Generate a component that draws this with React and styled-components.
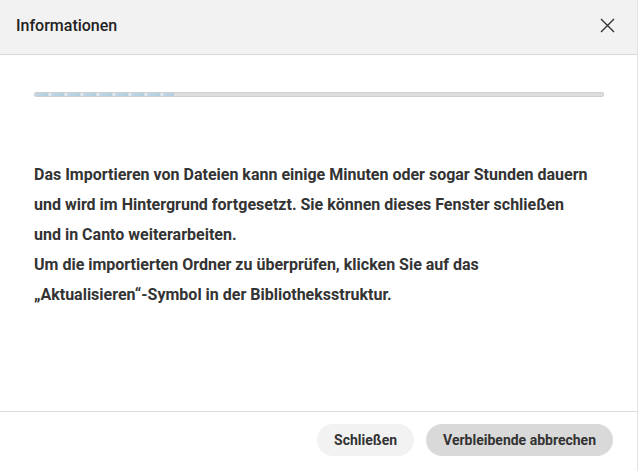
import React from "react";
import styled, { createGlobalStyle } from "styled-components";

const Global = createGlobalStyle`
  html, body { margin: 0; padding: 0; background: #ffffff; }
  body { font-family: Roboto, "Liberation Sans", Arial, sans-serif; }
`;

const Dialog = styled.div`
  width: 637px;
  height: 471px;
  display: flex;
  flex-direction: column;
  background: #ffffff;
  border-right: 1px solid #e4e4e4;
`;

const Header = styled.header`
  height: 55px;
  box-sizing: border-box;
  flex: 0 0 auto;
  display: flex;
  align-items: center;
  justify-content: space-between;
  padding: 0 21px 4px 16px;
  background: #f2f2f2;
  border-bottom: 1px solid #d9d9d9;
`;

const Title = styled.h2`
  margin: 0;
  font-size: 16px;
  font-weight: 500;
  color: #222222;
`;

const CloseButton = styled.button`
  border: 0;
  background: transparent;
  padding: 0;
  width: 18px;
  height: 18px;
  display: flex;
  align-items: center;
  justify-content: center;
  cursor: pointer;
`;

const Body = styled.main`
  flex: 1 1 auto;
  padding: 37px 33px 0 34px;
  display: flex;
  flex-direction: column;
`;

const Track = styled.div`
  height: 3px;
  background: #dedede;
  border: 1px solid #cfcfcf;
  border-radius: 2px;
  overflow: hidden;
`;

const Fill = styled.div`
  height: 100%;
  background: repeating-linear-gradient(
    90deg,
    #c3d7e6 0px,
    #aecde3 13px,
    #e3ecf2 14px,
    #e3ecf2 16px
  );
`;

const Message = styled.p`
  margin: 63px 0 0;
  font-size: 16px;
  font-weight: 700;
  line-height: 30px;
  color: #333333;
`;

const Footer = styled.footer`
  flex: 0 0 60px;
  border-top: 1px solid #dcdcdc;
  display: flex;
  justify-content: flex-end;
  align-items: flex-start;
  gap: 12px;
  padding: 12px 24px 0 0;
  box-sizing: border-box;
`;

const Button = styled.button`
  height: 32px;
  padding: 0 17px;
  border: 0;
  border-radius: 16px;
  font-family: Roboto, "Liberation Sans", Arial, sans-serif;
  font-size: 14px;
  font-weight: 700;
  color: #333333;
  background: ${(p) => (p.$primary ? "#d9d9d9" : "#f2f2f2")};
  cursor: pointer;
`;

export default function App() {
  return (
    <>
      <Global />
      <Dialog>
        <Header>
          <Title>Informationen</Title>
          <CloseButton aria-label="Schließen">
            <svg width="15" height="15" viewBox="0 0 15 15">
              <path d="M1 1 L14 14 M14 1 L1 14" stroke="#333" strokeWidth="1.4" fill="none" />
            </svg>
          </CloseButton>
        </Header>
        <Body>
          <Track>
            <Fill style={{ width: "24.4%" }} />
          </Track>
          <Message>
            Das Importieren von Dateien kann einige Minuten oder sogar Stunden dauern
            <br />
            und wird im Hintergrund fortgesetzt. Sie können dieses Fenster schließen
            <br />
            und in Canto weiterarbeiten.
            <br />
            Um die importierten Ordner zu überprüfen, klicken Sie auf das
            <br />
            „Aktualisieren“-Symbol in der Bibliotheksstruktur.
          </Message>
        </Body>
        <Footer>
          <Button>Schließen</Button>
          <Button $primary>Verbleibende abbrechen</Button>
        </Footer>
      </Dialog>
    </>
  );
}
